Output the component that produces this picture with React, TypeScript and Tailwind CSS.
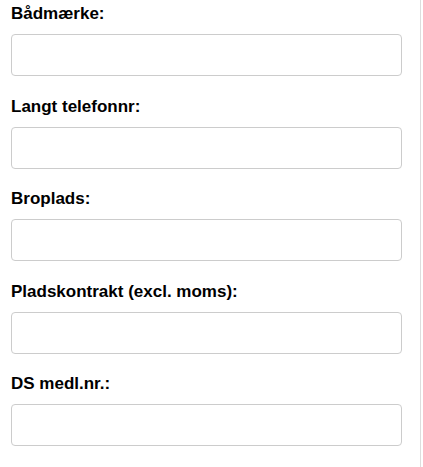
const fields = [
  "Bådmærke:",
  "Langt telefonnr:",
  "Broplads:",
  "Pladskontrakt (excl. moms):",
  "DS medl.nr.:",
];

export default function App() {
  return (
    <div className="min-h-[467px] w-[423px] bg-white">
      <div
        className="min-h-[467px] w-[421px] border-r border-[#dddddd] pl-[11px] pr-[18px] pt-[4px]"
        style={{ fontFamily: '"Liberation Sans", Arial, sans-serif' }}
      >
        {fields.map((label) => (
          <div key={label} className="mb-[20.5px]">
            <label className="mb-[10px] block h-[20px] text-[17px] font-bold leading-[20px] text-black">
              {label}
            </label>
            <input
              type="text"
              className="block h-[42px] w-full rounded-[4px] border border-[#cccccc] bg-white px-3 text-[14px] outline-none"
            />
          </div>
        ))}
      </div>
    </div>
  );
}
